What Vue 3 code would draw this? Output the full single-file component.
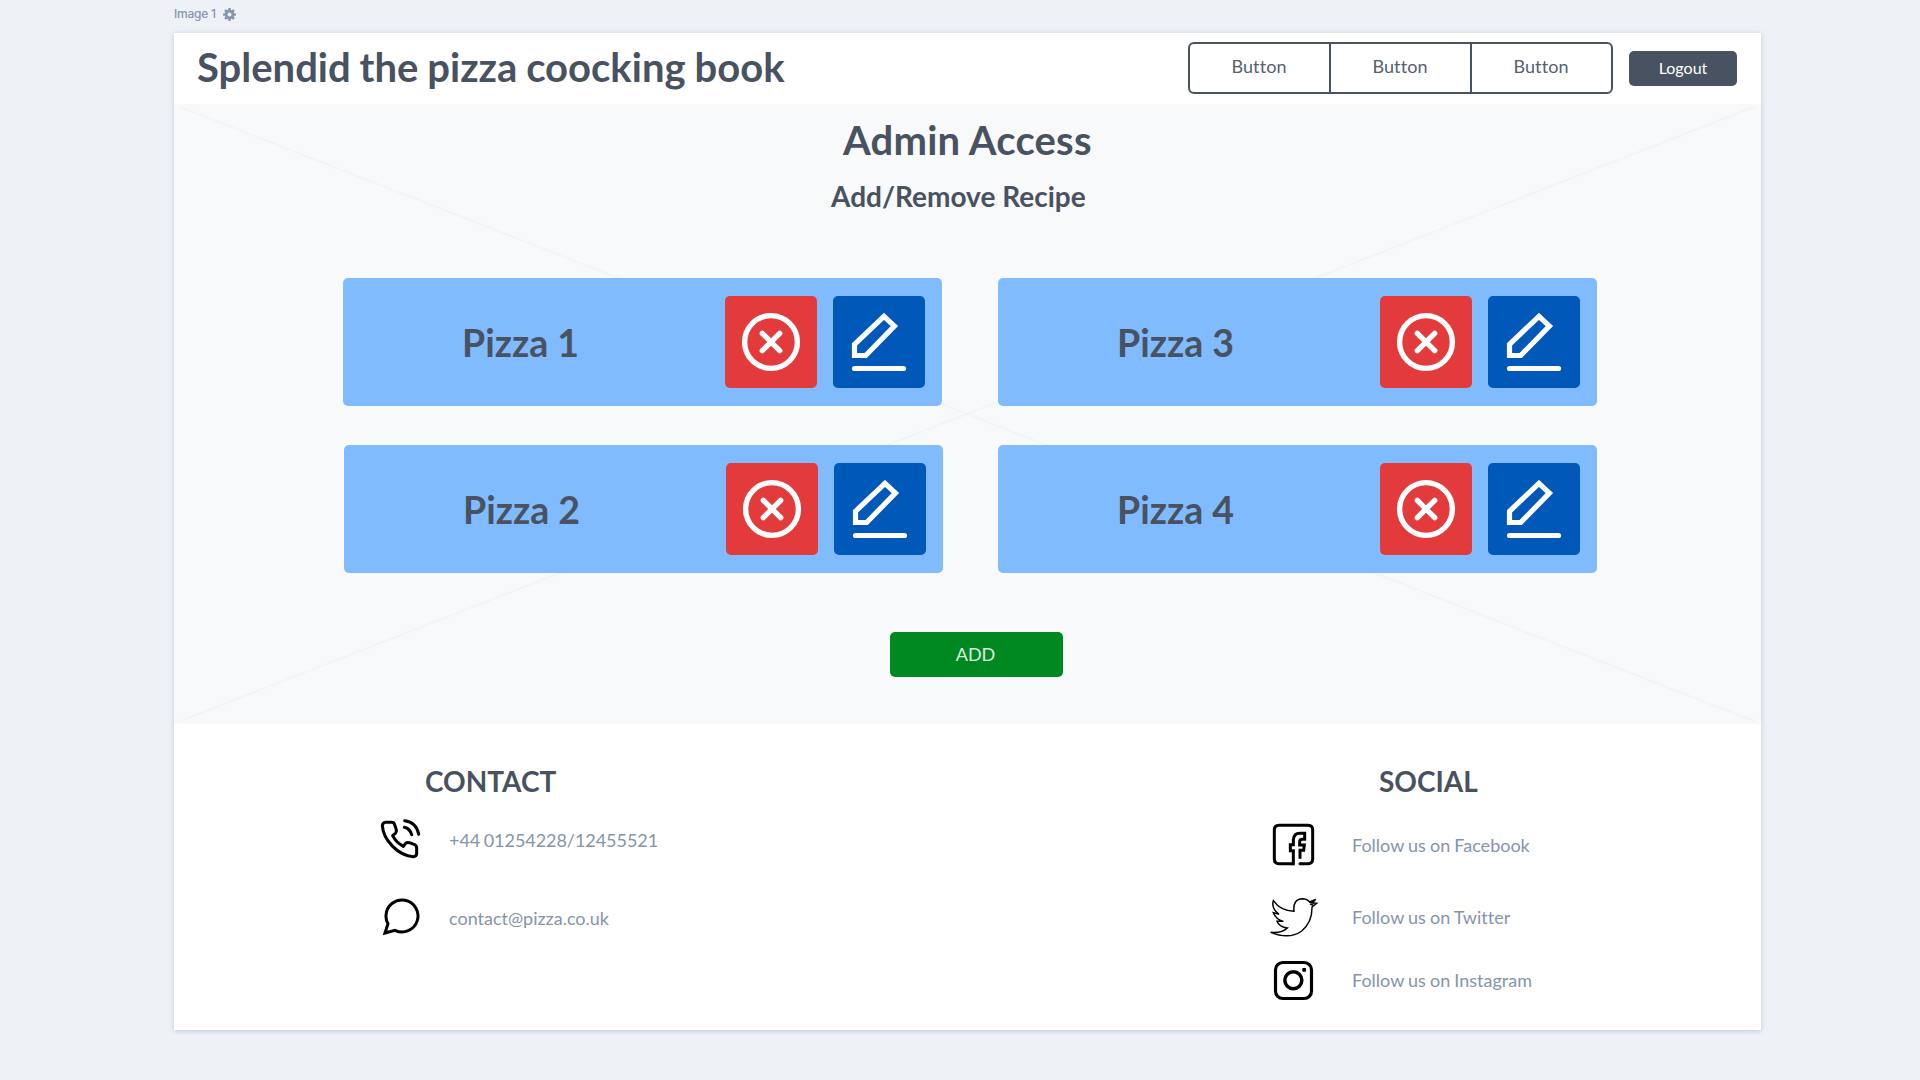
<script setup>
const nav = ['Button', 'Button', 'Button']
const columns = [
  ['Pizza 1', 'Pizza 2'],
  ['Pizza 3', 'Pizza 4'],
]
</script>

<template>
  <div class="page">
    <div class="label">
      <span>Image 1</span>
      <svg class="gear" viewBox="0 0 26 26">
        <g fill="#8795ab">
          <rect v-for="a in [0, 45, 90, 135]" :key="a" x="10.4" y="0.2" width="5.2" height="25.6" rx="1.2" :transform="`rotate(${a} 13 13)`" />
          <circle cx="13" cy="13" r="9.4" />
        </g>
        <circle cx="13" cy="13" r="4" fill="#eef2f7" />
      </svg>
    </div>

    <div class="sheet">
      <header class="header">
        <h1>Splendid the pizza coocking book</h1>
        <nav class="group">
          <button v-for="(n, i) in nav" :key="i">{{ n }}</button>
        </nav>
        <button class="logout">Logout</button>
      </header>

      <main class="main">
        <svg class="cross" viewBox="0 0 1587 620" preserveAspectRatio="none">
          <path d="M5 2.5 1581 617.500M5 617.500 1581 2.500" stroke="#f2f4f6" stroke-width="2" fill="none" />
        </svg>
        <h2>Admin Access</h2>
        <h3>Add/Remove Recipe</h3>
        <div class="columns">
          <div v-for="(col, c) in columns" :key="c" class="column">
            <article v-for="name in col" :key="name" class="card">
              <span class="name">{{ name }}</span>
              <button class="tile remove" aria-label="Remove">
                <svg viewBox="0 0 92 92" fill="none" stroke="#fff" stroke-width="5.4">
                  <circle cx="46" cy="46" r="26.400" />
                  <path d="M37.300 37.300 54.700 54.700M54.700 37.300 37.300 54.700" stroke-linecap="round" />
                </svg>
              </button>
              <button class="tile edit" aria-label="Edit">
                <svg viewBox="0 0 92 92" fill="none" stroke="#fff" stroke-width="5.2">
                  <path d="M51 20.300 61.400 30 32.700 59.500H21.500V48.300Z" />
                  <path d="M21.500 72.500H70.500" stroke-linecap="round" />
                </svg>
              </button>
            </article>
          </div>
        </div>
        <button class="add">ADD</button>
      </main>

      <footer class="footer">
        <section class="contact">
          <h4>CONTACT</h4>
          <div class="row phone">
            <svg viewBox="60 204 123 123" width="41" height="41" fill="none" stroke="#000" stroke-width="9.2" stroke-linecap="round" stroke-linejoin="round">
              <path d="M77 217H94Q102 217 104 224L109 239Q110 246 106 250L98 257Q108 277 130 289L137 280Q141 276 148 278L162 283Q170 286 170 294V311Q169 320 160 320Q125 317 98 289Q69 260 67 227Q68 218 77 217Z" />
              <path d="M134 212Q169 216 176 253M133 232Q150 236 155 254" />
            </svg>
            <span>+44 01254228/12455521</span>
          </div>
          <div class="row mail">
            <svg viewBox="66 444 114 114" width="38" height="38" fill="none" stroke="#000" stroke-width="9">
              <path d="M75 549 84 521Q77 509 78 496A48 48 0 1 1 105 541Z" />
            </svg>
            <span>contact@pizza.co.uk</span>
          </div>
        </section>

        <section class="social">
          <h4>SOCIAL</h4>
          <div class="row facebook">
            <svg viewBox="66 219 129 129" width="43" height="43" fill="none" stroke="#000" stroke-width="9">
              <path d="M130 341H87Q73 341 73 327V240Q73 226 87 226H174Q188 226 188 240V327Q188 341 174 341H151" />
              <path d="M151 341H150" stroke-linecap="round" />
              <path d="M130 341V302H121V284H130V270Q131 250 150 250H164V268H157Q149 268 149 276V285H163L161 301H150V322" stroke-linecap="square" />
            </svg>
            <span>Follow us on Facebook</span>
          </div>
          <div class="row twitter">
            <svg viewBox="57 48 150 126" width="50" height="42" fill="none" stroke="#000" stroke-width="4.4">
              <path d="M70 62Q92 93 132 94Q128 57 158 56Q171 56 179 66L197 58 187 69 200 70 186 81Q187 126 155 153Q118 180 62 157Q96 160 112 144Q88 142 81 124L100 124Q78 118 70 98L87 103Q63 84 70 62Z" />
              <path d="M178 66 193 68M180 72 190 76" stroke-width="5" />
            </svg>
            <span>Follow us on Twitter</span>
          </div>
          <div class="row instagram">
            <svg viewBox="69 240 123 123" width="41" height="41" fill="none" stroke="#000">
              <rect x="76.500" y="247.500" width="108" height="108" rx="22" stroke-width="9.5" />
              <circle cx="130" cy="301" r="25.500" stroke-width="10.5" />
              <rect x="157" y="264" width="11" height="11" rx="2" fill="#000" stroke="none" />
            </svg>
            <span>Follow us on Instagram</span>
          </div>
        </section>
      </footer>
    </div>
  </div>
</template>

<style>
body {
  margin: 0;
  background: #eef2f7;
}
</style>

<style scoped>
.page {
  box-sizing: border-box;
  width: 1920px;
  height: 1080px;
  padding-left: 174px;
  background: #eef2f7;
  color: #485260;
  font-family: Lato, "Liberation Sans", sans-serif;
  font-variant-ligatures: none;
  overflow: hidden;
}
h1, h2, h3, h4 {
  margin: 0;
  font-weight: 700;
}
button {
  border: 0;
  padding: 0;
  color: inherit;
  font: inherit;
}
svg {
  display: block;
  flex: none;
}
.label {
  display: flex;
  align-items: flex-start;
  height: 33px;
  color: #8795ab;
  font: 500 12px/28px Inter, sans-serif;
  letter-spacing: -0.25px;
}
.label span {
  width: 49px;
  white-space: nowrap;
}
.gear {
  width: 13px;
  height: 13px;
  margin-top: 8px;
}
.sheet {
  width: 1587px;
  height: 997px;
  background: #fff;
  box-shadow: 0 1px 5px rgba(100, 120, 150, 0.35);
}
.header {
  display: flex;
  box-sizing: border-box;
  height: 71px;
  padding: 9px 24px 0 23px;
}
h1 {
  flex: 1;
  padding-top: 1px;
  font-size: 40px;
  line-height: 48px;
  word-spacing: -0.8px;
  white-space: nowrap;
}
.group {
  display: flex;
  box-sizing: border-box;
  width: 425px;
  height: 52px;
  margin-right: 16px;
  border: 2px solid #485260;
  border-radius: 6px;
}
.group button {
  flex: 1;
  background: transparent;
  color: #566070;
  font-size: 18px;
  letter-spacing: 0.1px;
  line-height: 44px;
  padding: 0 1px 4px 0;
}
.group button + button {
  border-left: 2px solid #485260;
}
.logout {
  width: 108px;
  height: 35px;
  margin-top: 9px;
  padding-bottom: 2px;
  border-radius: 5px;
  background: #485260;
  color: #fff;
  font-size: 16px;
}
.main {
  position: relative;
  display: flex;
  flex-direction: column;
  height: 620px;
  background: #f8f9fb;
}
.cross {
  position: absolute;
  inset: 0;
  width: 100%;
  height: 100%;
}
.main > :not(.cross) {
  position: relative;
}
h2 {
  margin: 12px 0 0 669px;
  font-size: 40px;
  letter-spacing: 0.2px;
  line-height: 48px;
}
h3 {
  margin: 11px 0 0 657px;
  font-size: 28px;
  line-height: 42px;
}
.columns {
  display: flex;
  gap: 55px;
  margin: 61px 0 0 169px;
}
.column {
  display: flex;
  flex-direction: column;
  gap: 39px;
  width: 600px;
}
.card {
  display: flex;
  align-items: center;
  box-sizing: border-box;
  width: 599px;
  height: 128px;
  padding: 0 17px 0 119px;
  border-radius: 5px;
  background: #80bbff;
}
.column:first-child .card:last-child {
  margin-left: 1px;
}
.name {
  flex: 1;
  font-size: 37.5px;
  font-weight: 700;
}
.tile {
  width: 92px;
  height: 92px;
  margin-left: 16px;
  border-radius: 5px;
}
.remove {
  background: #e33b3b;
}
.edit {
  background: #0058b9;
}
.add {
  width: 173px;
  height: 45px;
  margin: 59px 0 0 716px;
  padding: 0 2px 2px 0;
  border-radius: 5px;
  background: #008920;
  color: #dcebe0;
  font-size: 18px;
}
.footer {
  display: flex;
  justify-content: space-between;
}
h4 {
  font-size: 28px;
  line-height: 34px;
}
.contact {
  padding: 40px 0 0 206px;
}
.contact h4 {
  margin-left: 45px;
}
.social {
  width: 492px;
  padding-top: 40px;
}
.social h4 {
  margin-left: 110px;
}
.row {
  display: flex;
  align-items: center;
  color: #8694ab;
  font-size: 18px;
  white-space: nowrap;
}
.phone {
  margin-top: 20px;
}
.phone span {
  margin-left: 28px;
  padding-top: 2px;
  letter-spacing: -0.05px;
  word-spacing: -1px;
}
.mail {
  margin: 39px 0 0 2px;
}
.mail span {
  margin-left: 29px;
  padding-top: 2px;
}
.social .row {
  word-spacing: -0.5px;
}
.facebook {
  margin: 25px 0 0 3px;
}
.facebook span {
  margin-left: 37px;
}
.twitter {
  margin-top: 30px;
}
.twitter span {
  margin-left: 33px;
}
.instagram {
  margin: 22px 0 0 4px;
}
.instagram span {
  margin-left: 38px;
  padding-bottom: 2px;
}
</style>
